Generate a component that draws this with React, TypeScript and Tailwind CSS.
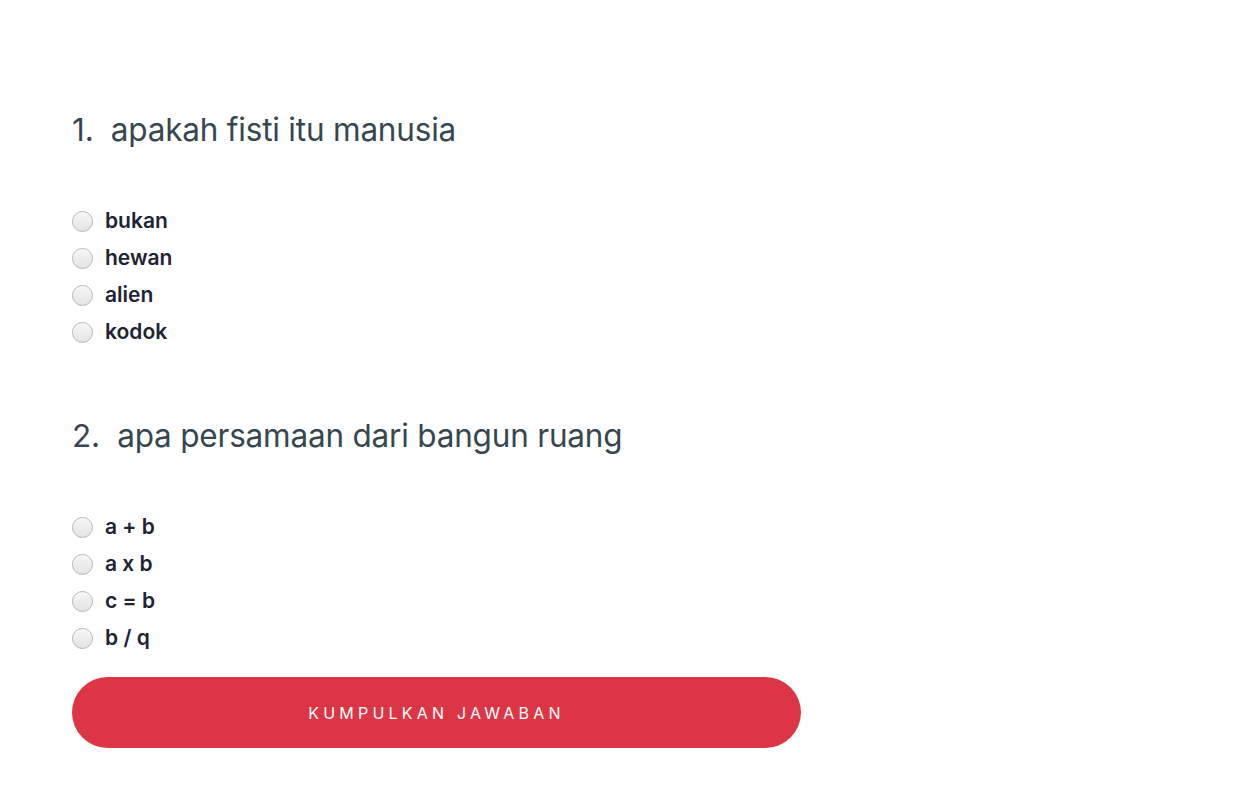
const questions = [
  { no: 1, text: "apakah fisti itu manusia", options: ["bukan", "hewan", "alien", "kodok"] },
  { no: 2, text: "apa persamaan dari bangun ruang", options: ["a + b", "a x b", "c = b", "b / q"] },
];

function Radio() {
  return (
    <span className="w-[21px] h-[21px] shrink-0 rounded-full border border-[#b5b5b5] bg-gradient-to-b from-[#f6f6f6] to-[#e4e4e4] shadow-[inset_0_1px_1px_rgba(255,255,255,0.9)]" />
  );
}

export default function App() {
  return (
    <div className="min-h-screen bg-white font-['Inter','Liberation_Sans',sans-serif] pl-[72px] pt-[108px]">
      <form className="w-[729px]">
        {questions.map((q) => (
          <div key={q.no} className="mb-[71px] last-of-type:mb-[28px]">
            <h2 className="text-[31.5px] leading-[44px] text-[#37474f] font-normal tracking-[-0.2px]">
              {q.no}.&nbsp; {q.text}
            </h2>
            <div className="mt-[58px] flex flex-col gap-[15px]">
              {q.options.map((opt) => (
                <label key={opt} className="flex items-center gap-[12px] h-[22px] cursor-pointer">
                  <Radio />
                  <span className="text-[21px] font-semibold text-[#1e2433]">{opt}</span>
                </label>
              ))}
            </div>
          </div>
        ))}
        <button
          type="button"
          className="w-full h-[71px] rounded-full bg-[#dc3545] text-white text-[16px] tracking-[4.2px] uppercase"
        >
          Kumpulkan Jawaban
        </button>
      </form>
    </div>
  );
}
